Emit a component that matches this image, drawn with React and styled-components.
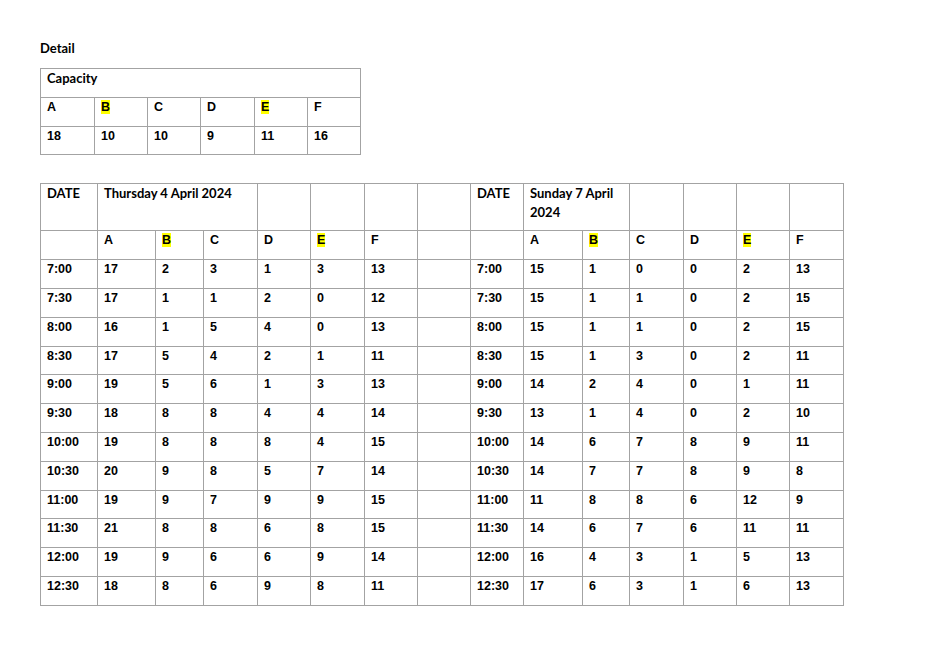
import React from "react";
import styled, { createGlobalStyle } from "styled-components";

const GlobalStyle = createGlobalStyle`
  body {
    margin: 0;
    background: #fff;
    color: #000;
  }
`;

const Page = styled.div`
  padding: 39px 0 40px 40px;
`;

const Title = styled.div`
  font-family: Lato, "Liberation Sans", sans-serif;
  font-weight: bold;
  font-size: 13px;
  line-height: 19px;
  margin-bottom: 10px;
`;

const Grid = styled.table`
  border-collapse: collapse;
  table-layout: fixed;
  width: ${(p) => p.$width}px;
  border: 1px solid #808080;
  margin-bottom: ${(p) => p.$gap || 0}px;
`;

const Row = styled.tr`
  height: ${(p) => (p.$tall ? 47 : 28.8)}px;
`;

const Cell = styled.td`
  border: 1px solid #a3a3a3;
  padding: 0 6px;
  vertical-align: top;
  font-family: ${(p) =>
    p.$head
      ? 'Lato, "Liberation Sans", sans-serif'
      : '"Liberation Sans", Arial, sans-serif'};
  font-weight: bold;
  font-size: ${(p) => (p.$head ? 13 : 12.5)}px;
  line-height: 19px;
`;

const Mark = styled.span`
  background: #ffff00;
`;

const letters = ["A", "B", "C", "D", "E", "F"];

const Letter = ({ l }) => (l === "B" || l === "E" ? <Mark>{l}</Mark> : l);

const thursday = [
  ["7:00", 17, 2, 3, 1, 3, 13],
  ["7:30", 17, 1, 1, 2, 0, 12],
  ["8:00", 16, 1, 5, 4, 0, 13],
  ["8:30", 17, 5, 4, 2, 1, 11],
  ["9:00", 19, 5, 6, 1, 3, 13],
  ["9:30", 18, 8, 8, 4, 4, 14],
  ["10:00", 19, 8, 8, 8, 4, 15],
  ["10:30", 20, 9, 8, 5, 7, 14],
  ["11:00", 19, 9, 7, 9, 9, 15],
  ["11:30", 21, 8, 8, 6, 8, 15],
  ["12:00", 19, 9, 6, 6, 9, 14],
  ["12:30", 18, 8, 6, 9, 8, 11],
];

const sunday = [
  [15, 1, 0, 0, 2, 13],
  [15, 1, 1, 0, 2, 15],
  [15, 1, 1, 0, 2, 15],
  [15, 1, 3, 0, 2, 11],
  [14, 2, 4, 0, 1, 11],
  [13, 1, 4, 0, 2, 10],
  [14, 6, 7, 8, 9, 11],
  [14, 7, 7, 8, 9, 8],
  [11, 8, 8, 6, 12, 9],
  [14, 6, 7, 6, 11, 11],
  [16, 4, 3, 1, 5, 13],
  [17, 6, 3, 1, 6, 13],
];

const capacity = [18, 10, 10, 9, 11, 16];
const smallCols = [54, 53, 53, 54, 53, 53];
const bigCols = [57, 58, 48, 54, 53, 54, 53, 53, 53, 59, 47, 54, 53, 53, 54];

export default function App() {
  return (
    <Page>
      <GlobalStyle />
      <Title>Detail</Title>

      <Grid $width={320} $gap={28}>
        <colgroup>
          {smallCols.map((w, i) => (
            <col key={i} style={{ width: w }} />
          ))}
        </colgroup>
        <tbody>
          <Row>
            <Cell $head colSpan={6}>
              Capacity
            </Cell>
          </Row>
          <Row>
            {letters.map((l) => (
              <Cell key={l}>
                <Letter l={l} />
              </Cell>
            ))}
          </Row>
          <Row>
            {capacity.map((v, i) => (
              <Cell key={i}>{v}</Cell>
            ))}
          </Row>
        </tbody>
      </Grid>

      <Grid $width={803}>
        <colgroup>
          {bigCols.map((w, i) => (
            <col key={i} style={{ width: w }} />
          ))}
        </colgroup>
        <tbody>
          <Row $tall>
            <Cell $head>DATE</Cell>
            <Cell $head colSpan={3}>
              Thursday 4 April 2024
            </Cell>
            <Cell />
            <Cell />
            <Cell />
            <Cell />
            <Cell $head>DATE</Cell>
            <Cell $head colSpan={2}>
              Sunday 7 April 2024
            </Cell>
            <Cell />
            <Cell />
            <Cell />
            <Cell />
          </Row>
          <Row>
            <Cell />
            {letters.map((l) => (
              <Cell key={"t" + l}>
                <Letter l={l} />
              </Cell>
            ))}
            <Cell />
            <Cell />
            {letters.map((l) => (
              <Cell key={"s" + l}>
                <Letter l={l} />
              </Cell>
            ))}
          </Row>
          {thursday.map((r, i) => (
            <Row key={r[0]}>
              {r.map((v, j) => (
                <Cell key={"t" + j}>{v}</Cell>
              ))}
              <Cell />
              <Cell>{r[0]}</Cell>
              {sunday[i].map((v, j) => (
                <Cell key={"s" + j}>{v}</Cell>
              ))}
            </Row>
          ))}
        </tbody>
      </Grid>
    </Page>
  );
}
